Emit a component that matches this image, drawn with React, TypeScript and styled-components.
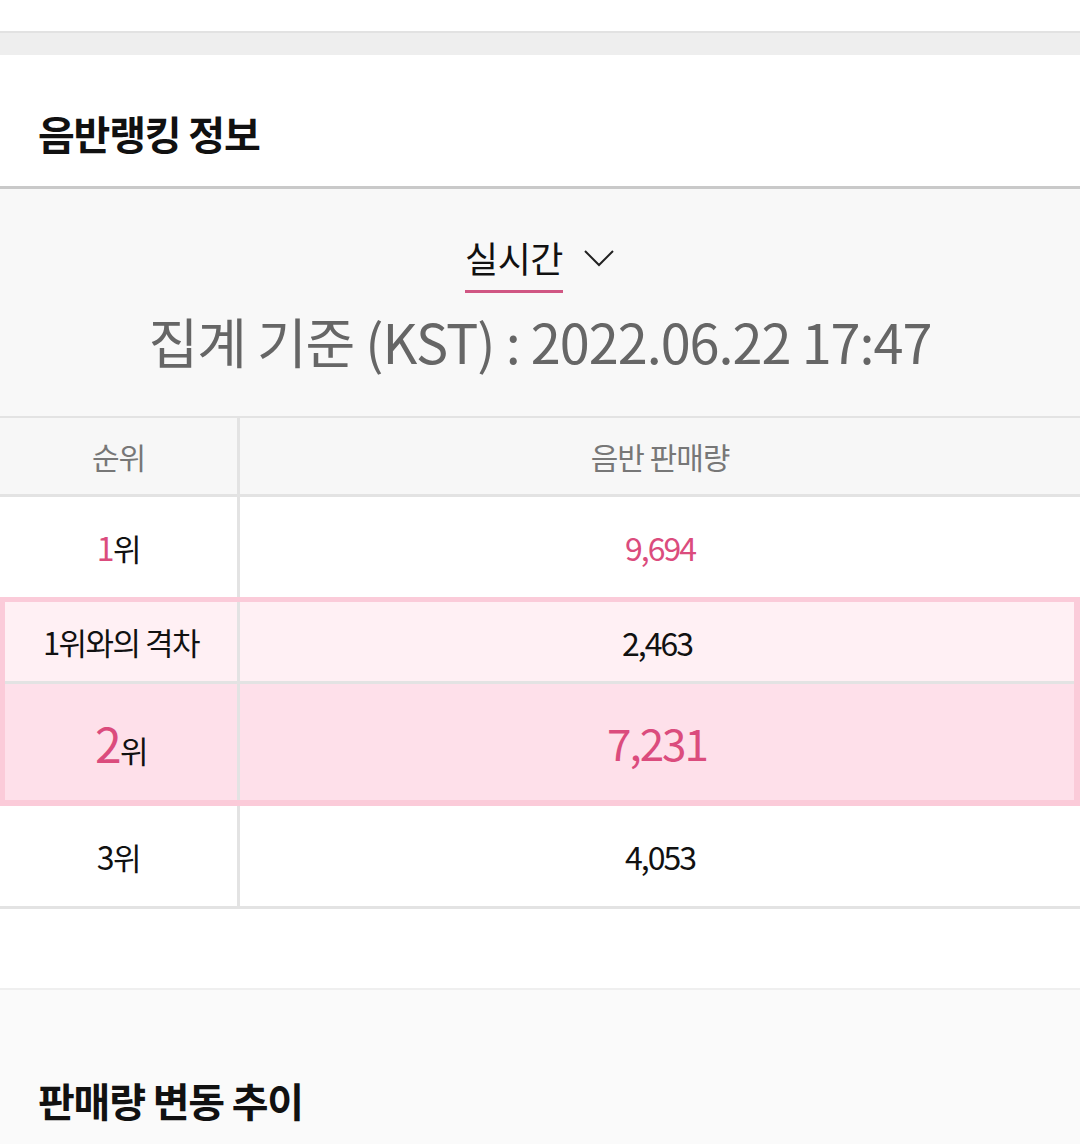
import React from "react";
import styled, { createGlobalStyle } from "styled-components";

const GlobalStyle = createGlobalStyle`
    html, body {
        margin: 0;
        padding: 0;
        background: #ffffff;
        font-family: "Noto Sans CJK KR", "Noto Sans", sans-serif;
        color: #111;
    }
    * {
        box-sizing: border-box;
    }
`;

const PINK = "#db4c7d";

const rows = [
    { rank: "1", value: "9,694" },
    { rank: "1위와의 격차", value: "2,463" },
    { rank: "2", value: "7,231" },
    { rank: "3", value: "4,053" },
];

const App = () => {
    const [top, gap, mine, third] = rows;

    return (
        <Page>
            <GlobalStyle />
            <TopSpacer />
            <Divider />
            <TitleSection>
                <SectionTitle>음반랭킹 정보</SectionTitle>
            </TitleSection>
            <FilterArea>
                <PeriodPicker>
                    <PeriodLabel>실시간</PeriodLabel>
                    <svg width="32" height="20" viewBox="0 0 32 20">
                        <path
                            d="M2 3 L16 17 L30 3"
                            fill="none"
                            stroke="#222"
                            strokeWidth="2"
                        />
                    </svg>
                </PeriodPicker>
                <BaseTime>집계 기준 (KST) : 2022.06.22 17:47</BaseTime>
            </FilterArea>
            <Table>
                <Row $height={76} $bg="#f7f7f7">
                    <RankCell>
                        <HeadText>순위</HeadText>
                    </RankCell>
                    <ValueCell>
                        <HeadText>음반 판매량</HeadText>
                    </ValueCell>
                </Row>
                <Row $height={100} $bg="#ffffff" $last>
                    <RankCell>
                        <RankText>
                            <Num $size={32}>{top.rank}</Num>위
                        </RankText>
                    </RankCell>
                    <ValueCell>
                        <Value $pink $size={32}>
                            {top.value}
                        </Value>
                    </ValueCell>
                </Row>
                <Highlight>
                    <Row $height={79} $bg="#fff0f4">
                        <RankCell $inset>
                            <RankText>{gap.rank}</RankText>
                        </RankCell>
                        <ValueCell>
                            <Value $size={32}>{gap.value}</Value>
                        </ValueCell>
                    </Row>
                    <Row $height={116} $bg="#fee0ea" $last>
                        <RankCell $inset>
                            <RankText>
                                <Num $size={48}>{mine.rank}</Num>위
                            </RankText>
                        </RankCell>
                        <ValueCell>
                            <Value $pink $size={44}>
                                {mine.value}
                            </Value>
                        </ValueCell>
                    </Row>
                </Highlight>
                <Row $height={100} $bg="#ffffff" $last>
                    <RankCell>
                        <RankText>
                            <Num $size={32} $plain>
                                {third.rank}
                            </Num>
                            위
                        </RankText>
                    </RankCell>
                    <ValueCell>
                        <Value $size={32}>{third.value}</Value>
                    </ValueCell>
                </Row>
            </Table>
            <BlankGap />
            <TrendSection>
                <SectionTitle>판매량 변동 추이</SectionTitle>
            </TrendSection>
        </Page>
    );
};

export default App;

const Page = styled.div`
    width: 1080px;
    height: 1144px;
    overflow: hidden;
    background: #ffffff;
`;

const TopSpacer = styled.div`
    height: 31px;
    background: #ffffff;
`;

const Divider = styled.div`
    height: 24px;
    background: #eeeeee;
    border-top: 2px solid #e2e2e2;
`;

const TitleSection = styled.section`
    height: 134px;
    padding: 50px 38px 0;
    background: #ffffff;
    border-bottom: 3px solid #c9c9c9;
`;

const SectionTitle = styled.h2`
    margin: 0;
    font-size: 40px;
    font-weight: 700;
    line-height: 56px;
    color: #111;
    letter-spacing: -1.2px;
`;

const FilterArea = styled.div`
    height: 227px;
    background: #f8f8f8;
    display: flex;
    flex-direction: column;
    align-items: center;
    padding-top: 43px;
`;

const PeriodPicker = styled.div`
    display: flex;
    align-items: center;
    gap: 20px;

    svg {
        margin-top: -10px;
    }
`;

const PeriodLabel = styled.span`
    font-size: 36px;
    line-height: 50px;
    color: #111;
    padding-bottom: 8px;
    border-bottom: 3px solid #d05683;
    letter-spacing: -0.5px;
`;

const BaseTime = styled.div`
    margin-top: 12px;
    font-size: 54px;
    line-height: 72px;
    color: #666666;
    letter-spacing: -1px;
`;

const Table = styled.div`
    border-top: 2px solid #e3e3e3;
    border-bottom: 3px solid #e3e3e3;
`;

const Row = styled.div<{ $height: number; $bg: string; $last?: boolean }>`
    display: flex;
    height: ${(p) => p.$height + (p.$last ? 0 : 3)}px;
    background: ${(p) => p.$bg};
    border-bottom: ${(p) => (p.$last ? "none" : "3px solid #e3e3e3")};
`;

const RankCell = styled.div<{ $inset?: boolean }>`
    width: ${(p) => (p.$inset ? 235 : 240)}px;
    flex-shrink: 0;
    border-right: 3px solid #e3e3e3;
    display: flex;
    align-items: center;
    justify-content: center;
`;

const ValueCell = styled.div`
    flex: 1;
    display: flex;
    align-items: center;
    justify-content: center;
`;

const HeadText = styled.span`
    font-size: 30px;
    color: #777777;
    letter-spacing: -1px;
`;

const RankText = styled.span`
    font-size: 31px;
    color: #111;
    letter-spacing: -1.5px;
`;

const Num = styled.span<{ $size: number; $plain?: boolean }>`
    font-size: ${(p) => p.$size}px;
    color: ${(p) => (p.$plain ? "#111" : PINK)};
`;

const Value = styled.span<{ $size: number; $pink?: boolean }>`
    font-size: ${(p) => p.$size}px;
    color: ${(p) => (p.$pink ? PINK : "#111")};
    letter-spacing: -2px;
`;

const Highlight = styled.div`
    border: 5px solid #fbcbd9;
    border-right-width: 6px;
    border-bottom-width: 6px;
`;

const BlankGap = styled.div`
    height: 79px;
    background: #ffffff;
`;

const TrendSection = styled.section`
    border-top: 2px solid #efefef;
    background: #fafafa;
    height: 200px;
    padding: 82px 38px 0;
`;
